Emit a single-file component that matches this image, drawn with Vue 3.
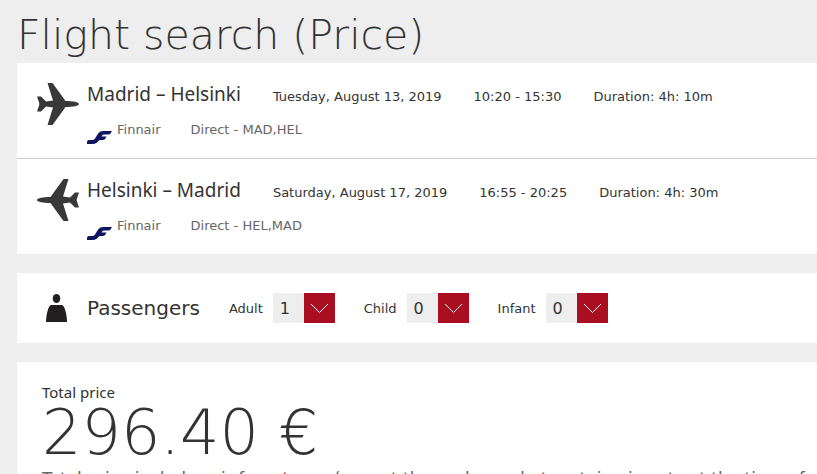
<template>
  <main class="page">
    <h1>Flight search (Price)</h1>

    <section class="card">
      <article v-for="flight in flights" :key="flight.route" class="flight">
        <svg
          class="plane"
          :class="{ back: flight.inbound }"
          viewBox="0 0 42 42"
          aria-hidden="true"
        >
          <path
            d="M10.500 0H15.500L28.500 18C36 18.200 42 19 42 21S36 24 28.500 24L15.500 42H10.500L16 24.500L9 23.500L4 28.500H0L2.500 21L0 13.500H4L9 18.500L16 17.500Z"
          />
        </svg>
        <div class="details">
          <div class="row">
            <h2>{{ flight.route }}</h2>
            <span>{{ flight.date }}</span>
            <span>{{ flight.time }}</span>
            <span>Duration: {{ flight.duration }}</span>
          </div>
          <div class="row airline">
            <span class="carrier">
              <svg class="logo" viewBox="0 0 25 13" aria-hidden="true">
                <path
                  d="M0 13V11Q0 9 2 9H5Q7 9 8 7.500L11.500 2Q13 0 16 0H25L23.500 2.500Q23 3.500 21 3.500H17Q15.500 3.500 14.500 5.500H19.500L18 8Q17.500 9 15.500 9H12.500L10 11.500Q8 13 5 13Z"
                />
              </svg>
              Finnair
            </span>
            <span>Direct - {{ flight.stops }}</span>
          </div>
        </div>
      </article>
    </section>

    <section class="card passengers">
      <svg class="person" viewBox="0 0 21 28" aria-hidden="true">
        <ellipse cx="10.500" cy="4.500" rx="3.800" ry="4.500" />
        <path d="M5 11H16C18.500 11 21 21 21 28H0C0 21 2.500 11 5 11Z" />
      </svg>
      <h2>Passengers</h2>
      <div v-for="group in groups" :key="group.id" class="form-group">
        <label :for="group.id">{{ group.label }}</label>
        <div class="select">
          <select :id="group.id" v-model="group.count">
            <option v-for="n in 10" :key="n" :value="n - 1">{{ n - 1 }}</option>
          </select>
          <svg class="arrow" viewBox="0 0 31 30" aria-hidden="true">
            <path d="M7 11L15.500 19.500L24 11" />
          </svg>
        </div>
      </div>
    </section>

    <section class="card price">
      <h3>Total price</h3>
      <p class="amount">296.40 €</p>
      <p class="note">
        Total price includes air fare, <a href="#taxes">taxes</a> (except those
        charged at certain airports at the time of departure)
      </p>
    </section>
  </main>
</template>

<script setup>
import { reactive } from "vue";

const flights = [
  {
    route: "Madrid – Helsinki",
    date: "Tuesday, August 13, 2019",
    time: "10:20 - 15:30",
    duration: "4h: 10m",
    stops: "MAD,HEL",
    inbound: false,
  },
  {
    route: "Helsinki – Madrid",
    date: "Saturday, August 17, 2019",
    time: "16:55 - 20:25",
    duration: "4h: 30m",
    stops: "HEL,MAD",
    inbound: true,
  },
];

const groups = reactive([
  { id: "adult", label: "Adult", count: 1 },
  { id: "child", label: "Child", count: 0 },
  { id: "infant", label: "Infant", count: 0 },
]);
</script>

<style>
body {
  margin: 0;
  background-color: #eee;
  overflow: hidden;
}
</style>

<style scoped>
.page {
  padding: 7px 0 0 17px;
  font-family: "DejaVu Sans", Verdana, sans-serif;
  font-size: 13px;
  color: #333;
}

h1,
h2,
h3,
p {
  margin: 0;
  font-weight: 400;
}

h1 {
  font-size: 41px;
  font-weight: 200;
  line-height: 56px;
}

h2 {
  font-family: "Noto Sans", sans-serif;
  font-size: 19px;
  line-height: 24px;
}

.card {
  margin-bottom: 19px;
  background-color: white;
}

.flight {
  display: flex;
  gap: 8px;
  padding: 20px;
}

.flight + .flight {
  border-top: 1px solid #ccc;
}

.plane {
  width: 42px;
  height: 42px;
  fill: #383838;
}

.plane.back {
  transform: scaleX(-1);
}

.row {
  display: flex;
  align-items: baseline;
  gap: 32px;
  height: 24px;
  line-height: 22px;
  white-space: nowrap;
}

.row h2 {
  line-height: 22px;
}

.airline {
  align-items: flex-start;
  gap: 30px;
  height: 20px;
  margin-top: 11px;
  line-height: 24px;
  color: #666;
}

.carrier {
  display: flex;
  gap: 5px;
}

.logo {
  width: 25px;
  height: 13px;
  margin-top: 13px;
  fill: #0b1560;
}

.passengers {
  display: flex;
  align-items: center;
  gap: 29px;
  padding: 20px 29px;
}

.passengers h2 {
  font-family: "DejaVu Sans", Verdana, sans-serif;
  font-size: 20px;
}

.person {
  width: 21px;
  height: 28px;
  margin-right: -9px;
  fill: #231f20;
}

.form-group {
  display: flex;
  align-items: center;
  gap: 10px;
}

.select {
  display: flex;
  position: relative;
}

select {
  appearance: none;
  width: 62px;
  height: 30px;
  padding: 0 7px;
  border: none;
  border-radius: 0;
  background-color: #eee;
  font: 16px "DejaVu Sans", Verdana, sans-serif;
  color: #333;
}

.arrow {
  position: absolute;
  right: 0;
  width: 31px;
  height: 30px;
  background-color: #a90e21;
  fill: none;
  stroke: white;
  pointer-events: none;
}

.price {
  padding: 20px 25px;
  margin-bottom: 0;
}

h3 {
  font-family: "Noto Sans", sans-serif;
  font-size: 15px;
  line-height: 20px;
}

.amount {
  font-size: 62px;
  font-weight: 200;
  line-height: 62px;
}

.note {
  font-size: 17px;
  line-height: 30px;
  white-space: nowrap;
  color: #666;
}

.note a {
  color: #d0103a;
  text-decoration: none;
}
</style>
